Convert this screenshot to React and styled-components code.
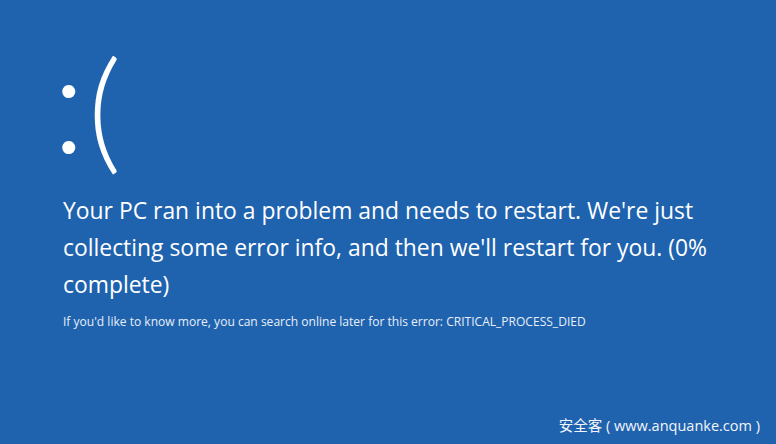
import React from "react";
import styled, { createGlobalStyle } from "styled-components";

const GlobalStyle = createGlobalStyle`
  html, body {
    margin: 0;
    padding: 0;
    background: #1f63af;
  }
  * { box-sizing: border-box; }
`;

const Screen = styled.div`
  width: 776px;
  height: 444px;
  background: #1f63af;
  color: #ffffff;
  font-family: "Open Sans", "Noto Sans", sans-serif;
  display: flex;
  flex-direction: column;
  padding: 0 16px 0 63px;
  overflow: hidden;
`;

const Frown = styled.div`
  font-family: "Lato", sans-serif;
  font-weight: 300;
  font-size: 132px;
  line-height: 1;
  height: 125px;
  margin-top: 40px;
  margin-left: -11px;
  letter-spacing: 2px;
`;

const Eyes = styled.span`
  font-size: 140px;
  line-height: 0;
  vertical-align: 4px;
  letter-spacing: 0;
  margin-right: 2px;
`;

const Message = styled.p`
  margin: 27px 0 0;
  font-size: 22.9px;
  font-weight: 400;
  line-height: 37px;
  max-width: 690px;
`;

const Detail = styled.p`
  margin: 11px 0 0;
  font-size: 12.05px;
  line-height: 16px;
  color: #e8eef7;
`;

const Footer = styled.div`
  margin-top: auto;
  display: flex;
  justify-content: flex-end;
  padding: 0 0 9px;
  font-family: "Open Sans", "Noto Sans CJK SC", sans-serif;
  font-size: 14.5px;
  color: #f2f5fa;
`;

export default function App() {
  return (
    <>
      <GlobalStyle />
      <Screen>
        <Frown>
          <Eyes>:</Eyes>(
        </Frown>
        <Message>
          Your PC ran into a problem and needs to restart. We're just
          collecting some error info, and then we'll restart for you. (0%
          complete)
        </Message>
        <Detail>
          If you'd like to know more, you can search online later for this
          error: CRITICAL_PROCESS_DIED
        </Detail>
        <Footer>安全客 ( www.anquanke.com )</Footer>
      </Screen>
    </>
  );
}
